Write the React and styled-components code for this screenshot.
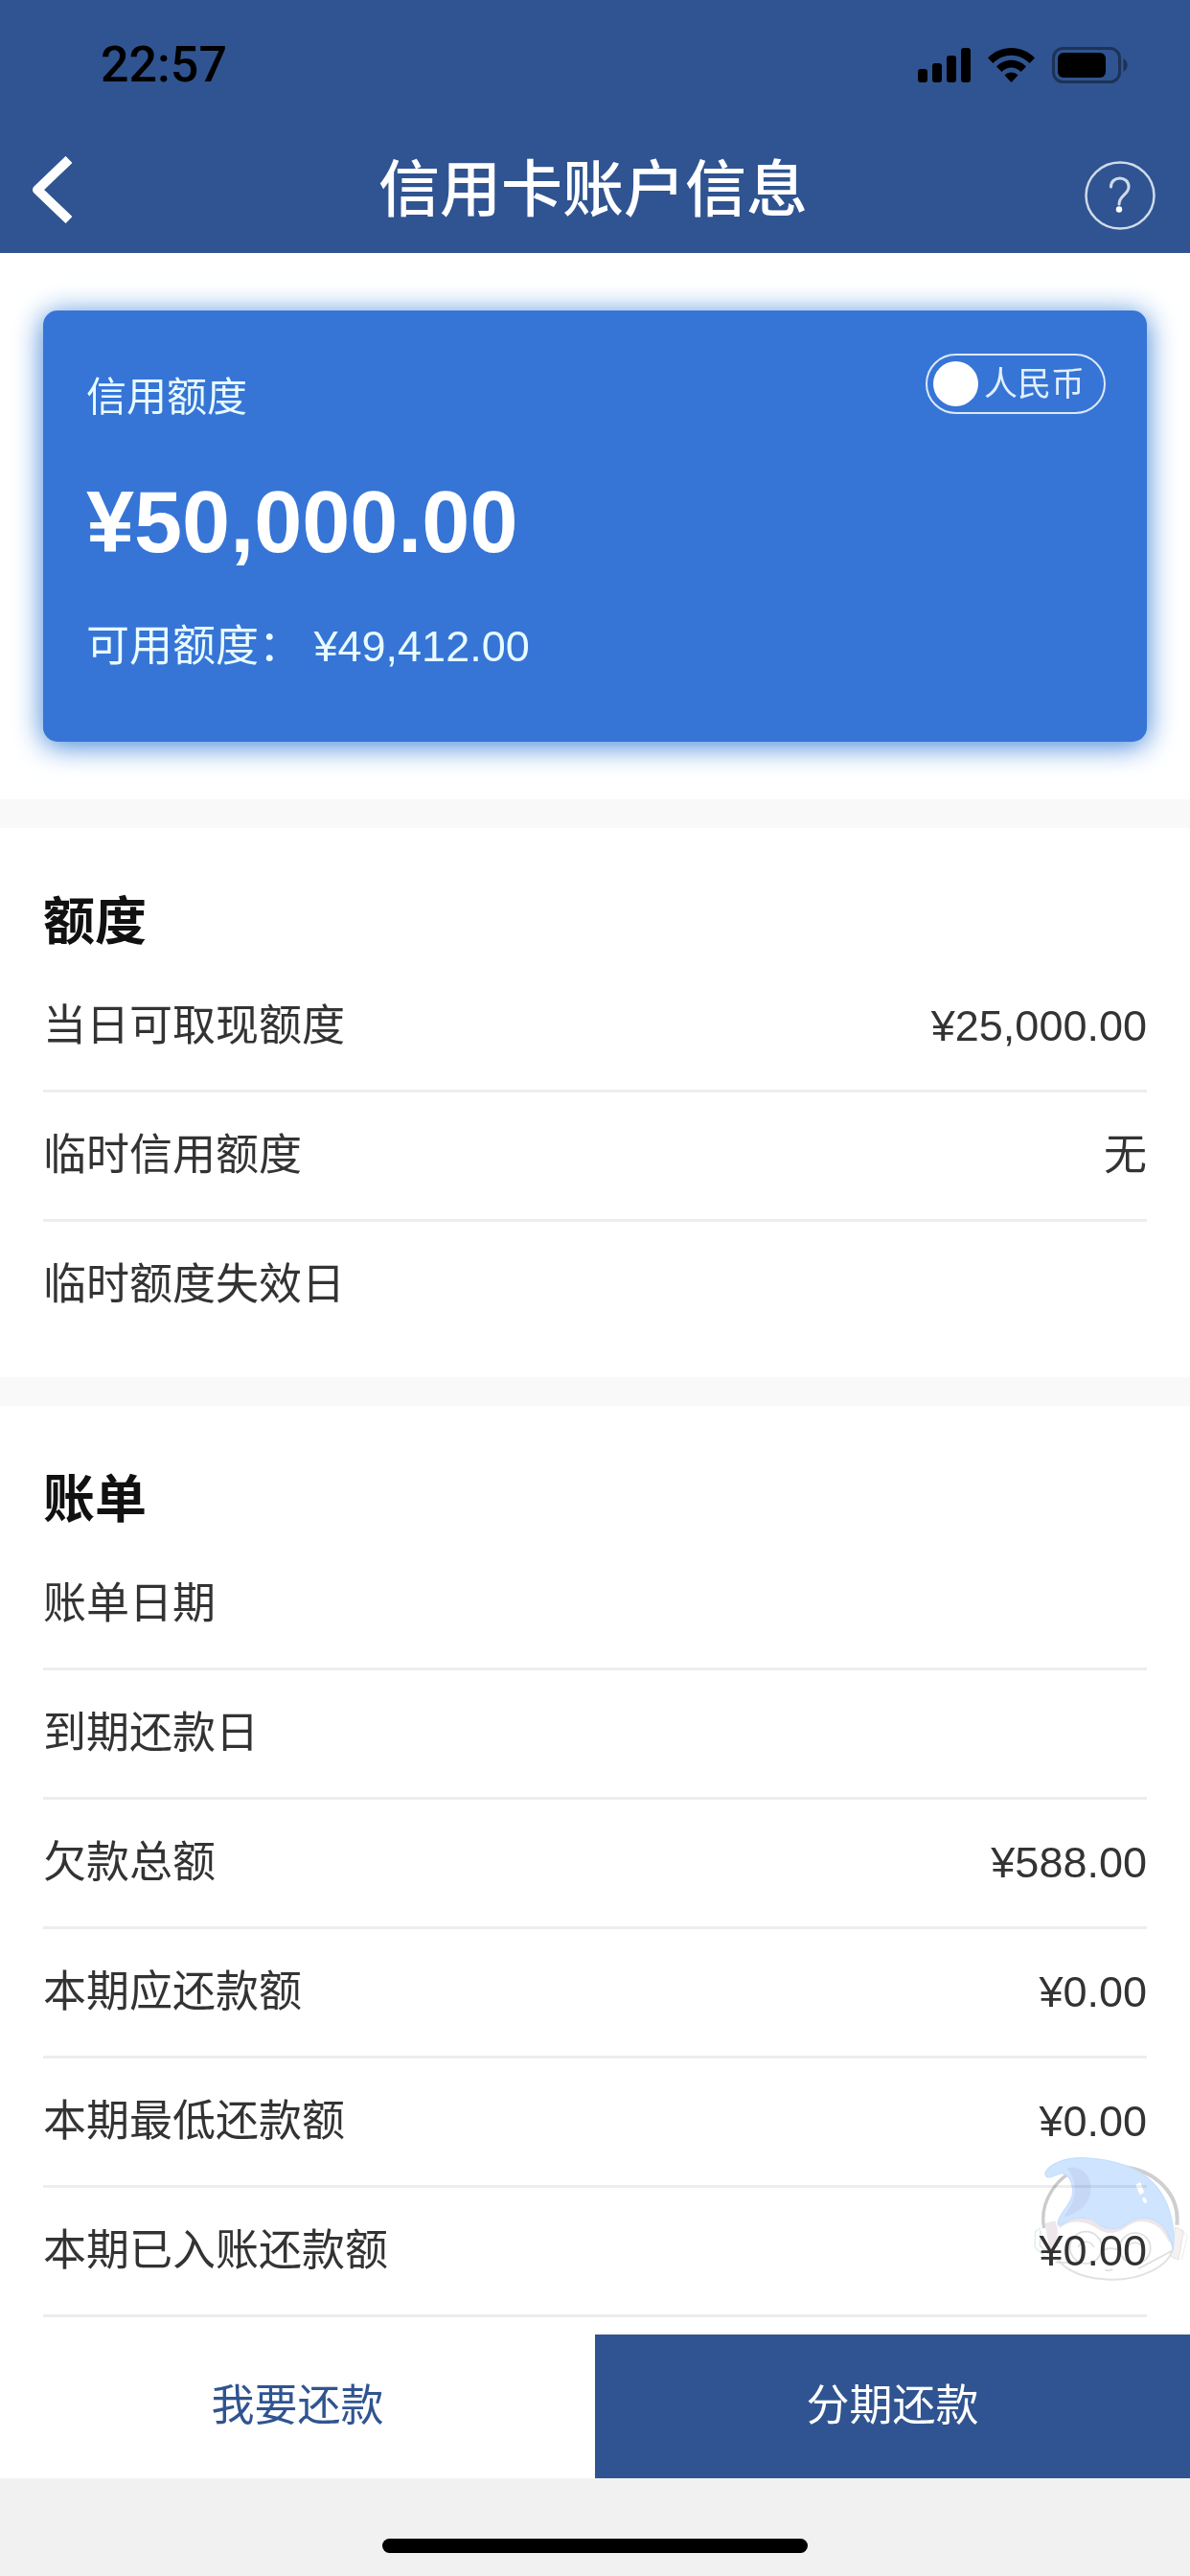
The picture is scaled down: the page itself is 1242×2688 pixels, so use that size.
import React from 'react';
import styled, { createGlobalStyle } from 'styled-components';

const GlobalStyle = createGlobalStyle`
    *, *::before, *::after {
        box-sizing: border-box;
    }
    body, h1, h2, p, ul, dl, dd {
        margin: 0;
        padding: 0;
    }
    body, button, input {
        font-family: "Liberation Sans", "Noto Sans CJK SC", sans-serif;
    }
    button {
        border: 0;
        padding: 0;
        background: none;
        cursor: pointer;
    }
    svg {
        display: block;
    }
`

const Page = styled.div`
    display: flex;
    flex-direction: column;
    min-height: 100vh;
    background: #ffffff;
    color: #333333;
`

const Header = styled.header`
    background: #305491;
    color: #ffffff;
`

const StatusBar = styled.div`
    display: flex;
    align-items: center;
    justify-content: space-between;
    height: 136px;
    padding: 0 65px 0 105px;
    color: #000000;
`

const Clock = styled.time`
    font-family: Roboto, sans-serif;
    font-size: 52px;
    font-weight: 500;
    line-height: 60px;
`

const StatusIcons = styled.div`
    display: flex;
    align-items: center;
    gap: 18px;
`

const NavBar = styled.div`
    display: grid;
    grid-template-columns: 1fr auto 1fr;
    align-items: center;
    height: 128px;
    padding: 0 36px 4px 32px;
`

const BackButton = styled.button`
    justify-self: start;
`

const HelpButton = styled.button`
    justify-self: end;
    align-self: end;
    margin-bottom: 20px;
`

const Title = styled.h1`
    font-size: 64px;
    font-weight: 500;
    line-height: 80px;
`

const Main = styled.main`
    position: relative;
    flex: 1;
    background: #ffffff;
`

const CardArea = styled.section`
    padding: 60px 45px;
`

const Card = styled.div`
    height: 450px;
    padding: 45px 43px 0 45px;
    border-radius: 15px;
    background: #3675d6;
    color: #e8fbff;
    box-shadow: 0 4px 30px #3a80d8;
`

const CardTop = styled.div`
    display: flex;
    justify-content: space-between;
    align-items: flex-start;
`

const CardLabel = styled.h2`
    padding-top: 16px;
    font-size: 42px;
    font-weight: 400;
    line-height: 60px;
`

const CurrencySwitch = styled.label`
    display: flex;
    align-items: center;
    gap: 6px;
    height: 63px;
    padding: 0 20px 0 6px;
    border: 2px solid #dce9fb;
    border-radius: 32px;
    color: #e3eefc;
    font-size: 35px;
    line-height: 48px;
    cursor: pointer;
`

const SwitchKnob = styled.input`
    appearance: none;
    width: 47px;
    height: 47px;
    margin: 0;
    border-radius: 50%;
    background: #ffffff;
`

const Limit = styled.p`
    padding-top: 50px;
    color: #ffffff;
    font-size: 90px;
    font-weight: 700;
    line-height: 100px;
`

const Available = styled.p`
    padding-top: 50px;
    font-size: 45px;
    line-height: 60px;
`

const Section = styled.section`
    padding: 56px 45px ${({ $last }) => ($last ? '0' : '27px')};
    border-top: 30px solid #f9f9f9;
`

const SectionTitle = styled.h2`
    color: #111111;
    font-size: 54px;
    font-weight: 700;
    line-height: 85px;
`

const Row = styled.div`
    display: flex;
    align-items: center;
    justify-content: space-between;
    height: 135px;
    border-bottom: 3px solid ${({ $plain }) => ($plain ? 'transparent' : '#ededed')};
    font-size: 45px;
    line-height: 60px;
`

const Assistant = styled.button`
    position: absolute;
    right: 0;
    bottom: 36px;
    mix-blend-mode: multiply;
`

const Footer = styled.footer`
    background: #f1f1f1;
`

const Actions = styled.div`
    display: grid;
    grid-template-columns: 1fr 1fr;
`

const Action = styled.button`
    height: 150px;
    background: ${({ $primary }) => ($primary ? '#305491' : '#ffffff')};
    color: ${({ $primary }) => ($primary ? '#ffffff' : '#305491')};
    font-size: 45px;
    line-height: 60px;
`

const HomeArea = styled.div`
    display: flex;
    justify-content: center;
    align-items: flex-end;
    height: 102px;
    padding-bottom: 24px;
`

const HomeIndicator = styled.div`
    width: 444px;
    height: 15px;
    border-radius: 8px;
    background: #000000;
`

const limits = [
    { label: '当日可取现额度', value: '¥25,000.00' },
    { label: '临时信用额度', value: '无' },
    { label: '临时额度失效日', value: '' },
]

const bill = [
    { label: '账单日期', value: '' },
    { label: '到期还款日', value: '' },
    { label: '欠款总额', value: '¥588.00' },
    { label: '本期应还款额', value: '¥0.00' },
    { label: '本期最低还款额', value: '¥0.00' },
    { label: '本期已入账还款额', value: '¥0.00' },
]

function SignalIcon() {
    return (
        <svg width="55" height="36" viewBox="0 0 55 36" aria-hidden="true">
            <rect x="0" y="22" width="10" height="14" rx="3" />
            <rect x="15" y="16" width="10" height="20" rx="3" />
            <rect x="30" y="8" width="10" height="28" rx="3" />
            <rect x="45" y="0" width="10" height="36" rx="3" />
        </svg>
    )
}

function WifiIcon() {
    return (
        <svg width="49" height="36" viewBox="0 0 49 36" aria-hidden="true">
            <path d="M0 10.5 C13 -3.5 36 -3.5 49 10.5 L43.5 16 C33 5 16 5 5.500 16 Z" />
            <path d="M9 19.500 C17 10.500 32 10.500 40 19.500 L34.500 25 C29 19 20 19 14.500 25 Z" />
            <path d="M17.500 28.500 C21 24.500 28 24.500 31.500 28.500 L24.500 36 Z" />
        </svg>
    )
}

function BatteryIcon() {
    return (
        <svg width="79" height="38" viewBox="0 0 79 38" aria-hidden="true">
            <rect x="1.500" y="1.500" width="69" height="35" rx="10" fill="none" stroke="#000" strokeWidth="3" opacity="0.4" />
            <rect x="6" y="6" width="50" height="26" rx="6" />
            <path d="M74.500 12 C80 15 80 23 74.500 26 Z" opacity="0.4" />
        </svg>
    )
}

function BackIcon() {
    return (
        <svg width="44" height="70" viewBox="0 0 44 70" fill="none" stroke="#fff" strokeWidth="10" strokeLinejoin="round" aria-hidden="true">
            <path d="M40 3.500 L7 35 L40 66.500" />
        </svg>
    )
}

function HelpIcon() {
    return (
        <svg width="74" height="72" viewBox="0 0 74 72" fill="none" stroke="#d0daea" aria-hidden="true">
            <ellipse cx="37" cy="36" rx="35.500" ry="34.500" strokeWidth="2.500" />
            <path d="M27.500 27 C27.500 15 46 15 46 27 C46 35 36 36 36 45" strokeWidth="3" strokeLinecap="round" />
            <circle cx="36" cy="50.500" r="3.200" fill="#fff" stroke="none" />
        </svg>
    )
}

// pale helper mascot, multiplied over the list so the amounts stay readable
function MascotIcon() {
    return (
        <svg width="182" height="170" viewBox="0 0 546 510" fill="none" aria-hidden="true">
            <path d="M89 285 C74 205 125 120 215 92" stroke="#cbcbcb" strokeWidth="10" />
            <path d="M325 92 C440 100 515 180 505 275" stroke="#cfcfcf" strokeWidth="12" />
            <path d="M78 284 L62 296 L60 345 L92 374" stroke="#d5f2ee" strokeWidth="4" />
            <path d="M78 292 L76 340 L104 366 L130 360" stroke="#e3dee1" strokeWidth="4" />
            <path d="M92 270 L124 262 L145 340 L106 352 Z" fill="#eee6ea" />
            <path d="M500 282 L526 294 L510 384 L486 374 Z" fill="#f4f1f2" stroke="#e6e2e4" strokeWidth="3" />
            <path d="M512 286 L538 310 L520 384" stroke="#ebebeb" strokeWidth="3" />
            <path d="M132 290 C118 380 200 447 302 447 C400 447 480 400 492 345 C480 280 440 250 300 250 C200 250 150 262 132 290 Z" fill="#fff" />
            <path d="M130 380 C160 425 230 446 302 446 C395 446 478 405 492 350" stroke="#e2e2e2" strokeWidth="6" />
            <path d="M134 280 C170 246 225 256 262 282 C290 300 320 294 345 274 C390 244 455 252 486 325" stroke="#efe5e9" strokeWidth="14" />
            <path
                d="M93 112 C104 84 155 63 215 65 C302 70 382 92 432 145 C475 190 502 265 493 352 C482 310 468 268 425 256 C385 246 352 266 336 280 C312 291 282 288 262 274 C236 251 200 246 168 260 C152 267 144 282 132 270 C134 242 170 215 177 184 C183 158 174 124 150 114 C132 110 112 132 98 124 C93 121 92 117 93 112 Z"
                fill="#cfe4fe"
                stroke="#c5e1fb"
                strokeWidth="4"
            />
            <path d="M160 98 C200 85 236 115 236 160 C236 205 205 235 150 252 C165 225 182 205 184 180 C187 145 180 115 160 98 Z" fill="#c6d7f6" />
            <path d="M378 150 L390 144 L400 172 L390 178 Z" fill="#fff" stroke="#fff" strokeWidth="4" strokeLinejoin="round" />
            <ellipse cx="404" cy="198" rx="6" ry="9" fill="#fff" transform="rotate(-25 404 198)" />
            <g stroke="#dedede" strokeWidth="5">
                <circle cx="220" cy="346" r="50" />
                <circle cx="374" cy="348" r="48" />
                <path d="M196 345 C205 322 235 322 245 345" />
                <path d="M350 345 C360 326 388 326 396 345" />
                <path d="M270 358 C285 345 312 345 326 358" />
                <path d="M280 415 C288 420 296 419 304 413" />
                <path d="M385 412 L492 355" />
                <path d="M125 392 L200 394" />
            </g>
        </svg>
    )
}

function RowList({ items, lastPlain }) {
    return (
        <dl>
            {items.map(({ label, value }, index) => (
                <Row key={label} $plain={lastPlain && index === items.length - 1}>
                    <dt>{label}</dt>
                    <dd>{value}</dd>
                </Row>
            ))}
        </dl>
    )
}

function App() {
    return (
        <Page lang="zh-CN">
            <GlobalStyle />
            <Header>
                <StatusBar>
                    <Clock>22:57</Clock>
                    <StatusIcons>
                        <SignalIcon />
                        <WifiIcon />
                        <BatteryIcon />
                    </StatusIcons>
                </StatusBar>
                <NavBar>
                    <BackButton type="button">
                        <BackIcon />
                    </BackButton>
                    <Title>信用卡账户信息</Title>
                    <HelpButton type="button">
                        <HelpIcon />
                    </HelpButton>
                </NavBar>
            </Header>
            <Main>
                <CardArea>
                    <Card>
                        <CardTop>
                            <CardLabel>信用额度</CardLabel>
                            <CurrencySwitch>
                                <SwitchKnob type="checkbox" />
                                人民币
                            </CurrencySwitch>
                        </CardTop>
                        <Limit>¥50,000.00</Limit>
                        <Available>可用额度： ¥49,412.00</Available>
                    </Card>
                </CardArea>
                <Section>
                    <SectionTitle>额度</SectionTitle>
                    <RowList items={limits} lastPlain />
                </Section>
                <Section $last>
                    <SectionTitle>账单</SectionTitle>
                    <RowList items={bill} />
                </Section>
                <Assistant type="button">
                    <MascotIcon />
                </Assistant>
            </Main>
            <Footer>
                <Actions>
                    <Action type="button">我要还款</Action>
                    <Action type="button" $primary>分期还款</Action>
                </Actions>
                <HomeArea>
                    <HomeIndicator />
                </HomeArea>
            </Footer>
        </Page>
    )
}

export default App;
